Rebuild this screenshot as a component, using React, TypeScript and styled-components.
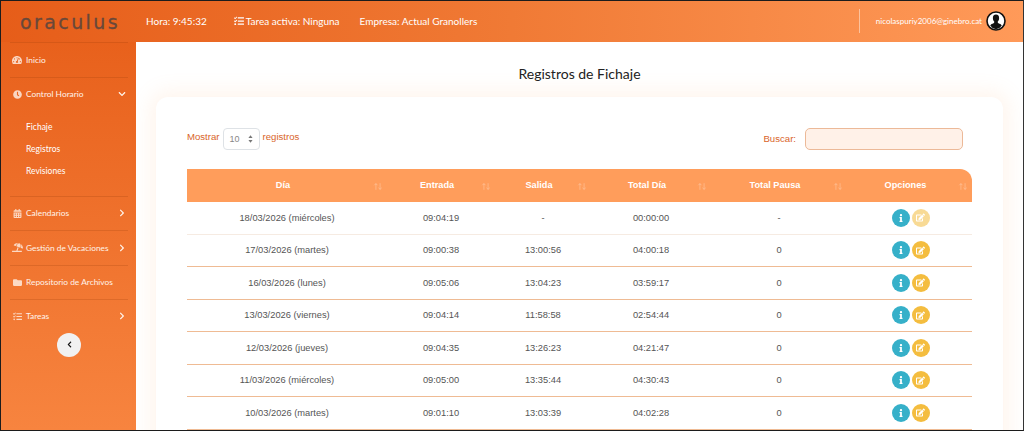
import React from 'react';
import styled, {createGlobalStyle} from 'styled-components';
import {
    FaCalendarAlt,
    FaChevronDown,
    FaChevronLeft,
    FaChevronRight,
    FaClock,
    FaEdit,
    FaFolder,
    FaInfo,
    FaTasks,
    FaTachometerAlt,
    FaUmbrellaBeach,
} from 'react-icons/fa';

const rows = [
    {day: '18/03/2026 (miércoles)', inTime: '09:04:19', outTime: '-', total: '00:00:00', pause: '-', open: true},
    {day: '17/03/2026 (martes)', inTime: '09:00:38', outTime: '13:00:56', total: '04:00:18', pause: '0'},
    {day: '16/03/2026 (lunes)', inTime: '09:05:06', outTime: '13:04:23', total: '03:59:17', pause: '0'},
    {day: '13/03/2026 (viernes)', inTime: '09:04:14', outTime: '11:58:58', total: '02:54:44', pause: '0'},
    {day: '12/03/2026 (jueves)', inTime: '09:04:35', outTime: '13:26:23', total: '04:21:47', pause: '0'},
    {day: '11/03/2026 (miércoles)', inTime: '09:05:00', outTime: '13:35:44', total: '04:30:43', pause: '0'},
    {day: '10/03/2026 (martes)', inTime: '09:01:10', outTime: '13:03:39', total: '04:02:28', pause: '0'},
];

const columns = ['Día', 'Entrada', 'Salida', 'Total Día', 'Total Pausa', 'Opciones'];

const SortIcon = () => (
    <SortSvg viewBox="0 0 12 10" width="10" height="9">
        <path d="M3.5 9V1.5M1.5 3.5l2-2 2 2M8.5 1v7.5M6.5 6.5l2 2 2-2" fill="none" stroke="currentColor" strokeWidth="1"/>
    </SortSvg>
);

const Avatar = () => (
    <svg viewBox="0 0 20 20" width="20" height="20">
        <circle cx="10" cy="10" r="9" fill="#fff" stroke="#111" strokeWidth="1.6"/>
        <path d="M10 3.6c-2.2 0-3.3 1.6-3.1 3.8.1 1.2.6 2.3 1.3 3 .2.8 0 1.4-.7 1.8-1.2.6-2.7 1-3.3 2.2A8 8 0 0 0 10 18.2a8 8 0 0 0 5.8-3.8c-.6-1.2-2.1-1.6-3.3-2.2-.7-.4-.9-1-.7-1.8.7-.7 1.2-1.8 1.3-3 .2-2.2-.9-3.8-3.1-3.8z" fill="#111"/>
    </svg>
);

const App: React.FC = () => {
    return (
        <Page>
            <GlobalStyle/>
            <TopBar>
                <Logo>oraculus</Logo>
                <TopInfo>Hora: 9:45:32</TopInfo>
                <TopInfo $left={27}><FaTasks size={10}/> Tarea activa: Ninguna</TopInfo>
                <TopInfo $left={20}>Empresa: Actual Granollers</TopInfo>
                <UserBlock>
                    <Email>nicolaspuriy2006@ginebro.cat</Email>
                    <Avatar/>
                </UserBlock>
            </TopBar>
            <Body>
                <Sidebar>
                    <NavItem><NavIcon><FaTachometerAlt size={10}/></NavIcon>Inicio</NavItem>
                    <NavItem>
                        <NavIcon><FaClock size={9}/></NavIcon>Control Horario
                        <NavArrow><FaChevronDown size={8}/></NavArrow>
                    </NavItem>
                    <SubMenu>
                        <SubItem>Fichaje</SubItem>
                        <SubItem>Registros</SubItem>
                        <SubItem>Revisiones</SubItem>
                    </SubMenu>
                    <NavItem>
                        <NavIcon><FaCalendarAlt size={9}/></NavIcon>Calendarios
                        <NavArrow><FaChevronRight size={8}/></NavArrow>
                    </NavItem>
                    <NavItem>
                        <NavIcon><FaUmbrellaBeach size={11}/></NavIcon>Gestión de Vacaciones
                        <NavArrow><FaChevronRight size={8}/></NavArrow>
                    </NavItem>
                    <NavItem><NavIcon><FaFolder size={9}/></NavIcon>Repositorio de Archivos</NavItem>
                    <NavItem $last>
                        <NavIcon><FaTasks size={9}/></NavIcon>Tareas
                        <NavArrow><FaChevronRight size={8}/></NavArrow>
                    </NavItem>
                    <CollapseButton><FaChevronLeft size={7}/></CollapseButton>
                </Sidebar>
                <Main>
                    <Title>Registros de Fichaje</Title>
                    <Card>
                        <Controls>
                            <LengthLabel>
                                Mostrar
                                <FakeSelect>
                                    10
                                    <SelectArrows viewBox="0 0 6 9" width="5" height="8">
                                        <path d="M3 0l2.5 3.4h-5zM3 9L.5 5.6h5z" fill="#777"/>
                                    </SelectArrows>
                                </FakeSelect>
                                registros
                            </LengthLabel>
                            <SearchLabel>
                                Buscar:
                                <SearchInput readOnly/>
                            </SearchLabel>
                        </Controls>
                        <Table>
                            <colgroup>
                                <col width="200"/>
                                <col width="108"/>
                                <col width="96"/>
                                <col width="120"/>
                                <col width="136"/>
                                <col width="125"/>
                            </colgroup>
                            <thead>
                                <tr>
                                    {columns.map(c => (
                                        <HeadCell key={c}>{c}<SortIcon/></HeadCell>
                                    ))}
                                </tr>
                            </thead>
                            <tbody>
                                {rows.map(r => (
                                    <Row key={r.day} $open={r.open}>
                                        <Cell>{r.day}</Cell>
                                        <Cell>{r.inTime}</Cell>
                                        <Cell>{r.outTime}</Cell>
                                        <Cell>{r.total}</Cell>
                                        <Cell>{r.pause}</Cell>
                                        <Cell>
                                            <Actions>
                                                <RoundButton $color="#36b0c9"><FaInfo size={8}/></RoundButton>
                                                <RoundButton $color="#f4bd3f" $faded={r.open}><FaEdit size={9}/></RoundButton>
                                            </Actions>
                                        </Cell>
                                    </Row>
                                ))}
                            </tbody>
                        </Table>
                    </Card>
                </Main>
            </Body>
        </Page>
    );
}

export default App;

const GlobalStyle = createGlobalStyle`
  html, body {
    margin: 0;
    padding: 0;
    background: #fff;
  }
`

const Page = styled.div`
  box-sizing: border-box;
  width: 1024px;
  height: 431px;
  overflow: hidden;
  border: 1px solid #1c1c1c;
  border-right-color: #333;
  font-family: Lato, "Noto Sans", sans-serif;
  background: linear-gradient(135deg, #e65c17 0%, #ff9d5c 100%);
`

const TopBar = styled.header`
  box-sizing: border-box;
  display: flex;
  align-items: center;
  height: 41px;
  padding-bottom: 2px;
  color: #fff;
  background: linear-gradient(90deg, #e65d19 0%, #f07a35 50%, #ff9a59 100%);
`

const Logo = styled.div`
  width: 145px;
  padding: 2px 0 0 19px;
  box-sizing: border-box;
  font-family: "DejaVu Sans", sans-serif;
  font-size: 19px;
  letter-spacing: 2.4px;
  color: #69483a;
  -webkit-text-stroke: 0.3px #69483a;
`

const TopInfo = styled.div<{ $left?: number }>`
  margin-left: ${p => p.$left || 0}px;
  font-size: 10px;
  display: flex;
  align-items: center;
  gap: 2px;
`

const UserBlock = styled.div`
  margin-left: auto;
  height: 24px;
  padding: 0 17px 0 16px;
  display: flex;
  align-items: center;
  gap: 4px;
  border-left: 1px solid rgba(255, 255, 255, 0.45);
`

const Email = styled.span`
  font-size: 8px;
  color: #fff;
`

const Body = styled.div`
  display: flex;
  height: 388px;
`

const Sidebar = styled.nav`
  width: 135px;
  flex-shrink: 0;
  box-sizing: border-box;
  padding: 0 8px 0 9px;
  color: #fff;
  background: linear-gradient(180deg, #e8611c 0%, #f7843f 100%);
`

const NavItem = styled.div<{ $last?: boolean }>`
  box-sizing: border-box;
  display: flex;
  align-items: center;
  height: ${p => p.$last ? 33.5 : 34.5}px;
  border-top: 1px solid rgba(150, 60, 10, 0.22);
  font-size: 8.4px;
  color: #fff3ea;
`

const NavIcon = styled.span`
  display: inline-flex;
  justify-content: center;
  width: 14px;
  margin-right: 2px;
  opacity: 0.8;
`

const NavArrow = styled.span`
  display: inline-flex;
  margin-left: auto;
  margin-right: 2px;
  stroke: #fff;
  stroke-width: 30px;
`

const SubMenu = styled.div`
  display: flex;
  flex-direction: column;
  padding: 4.5px 0 14px 16px;
`

const SubItem = styled.div`
  height: 22px;
  line-height: 22px;
  font-size: 8.5px;
  color: #fff;
`

const CollapseButton = styled.button`
  display: flex;
  align-items: center;
  justify-content: center;
  width: 24px;
  height: 24px;
  margin: 0 auto;
  padding: 0;
  border: 0;
  border-radius: 50%;
  color: #111;
  background: #f1f1f1;
`

const Main = styled.main`
  flex: 1;
  padding: 0 20px;
  background: #fff;
`

const Title = styled.h1`
  margin: 0;
  height: 55px;
  padding-top: 23px;
  box-sizing: border-box;
  text-align: center;
  font-size: 14px;
  line-height: 17px;
  font-weight: 400;
  color: #222;
`

const Card = styled.section`
  padding: 31px 31px 0 31px;
  border-radius: 12px 12px 0 0;
  background: #fff;
  box-shadow: 0 0 20px 6px rgba(255, 170, 110, 0.12);
  height: 400px;
`

const Controls = styled.div`
  display: flex;
  justify-content: space-between;
  align-items: flex-start;
  height: 22px;
  margin-bottom: 19px;
  padding-right: 9px;
  font-family: "Liberation Sans", Arial, sans-serif;
  font-size: 9.6px;
  color: #d9652a;
`

const LengthLabel = styled.label`
  display: flex;
  align-items: flex-start;
  gap: 3px;
  line-height: 18px;
`

const FakeSelect = styled.div`
  box-sizing: border-box;
  display: flex;
  align-items: center;
  justify-content: space-between;
  width: 37px;
  height: 22px;
  padding: 0 6px;
  border: 1px solid #dee2e6;
  border-radius: 4px;
  font-size: 9px;
  color: #888;
`

const SelectArrows = styled.svg`
  display: block;
`

const SearchLabel = styled.label`
  display: flex;
  align-items: flex-start;
  gap: 9px;
  line-height: 21px;
`

const SearchInput = styled.input`
  box-sizing: border-box;
  width: 158px;
  height: 22px;
  padding: 0;
  border: 1px solid #ecb998;
  border-radius: 5px;
  background: #fff1e8;
`

const Table = styled.table`
  width: 785px;
  table-layout: fixed;
  border-collapse: collapse;
  font-family: "Liberation Sans", Arial, sans-serif;
`

const HeadCell = styled.th`
  position: relative;
  height: 33px;
  padding: 0 8px 2px 0;
  box-sizing: border-box;
  font-size: 9.2px;
  font-weight: 700;
  text-align: center;
  color: #fff;
  background: #ff9d5b;

  &:last-child {
    border-radius: 0 12px 0 0;
  }
`

const SortSvg = styled.svg`
  position: absolute;
  right: 4px;
  top: 13px;
  color: rgba(255, 255, 255, 0.3);
`

const Row = styled.tr<{ $open?: boolean }>`
  border-bottom: 1px solid ${p => p.$open ? '#f6ebe2' : '#efbb94'};
`

const Cell = styled.td`
  height: 31.5px;
  padding: 0;
  font-size: 9.3px;
  text-align: center;
  color: #555;
`

const Actions = styled.div`
  display: flex;
  justify-content: center;
  gap: 2px;
  padding-left: 2px;
`

const RoundButton = styled.span<{ $color: string; $faded?: boolean }>`
  display: inline-flex;
  align-items: center;
  justify-content: center;
  width: 18px;
  height: 18px;
  border-radius: 50%;
  color: #fff;
  background: ${p => p.$color};
  opacity: ${p => p.$faded ? 0.55 : 1};
`
